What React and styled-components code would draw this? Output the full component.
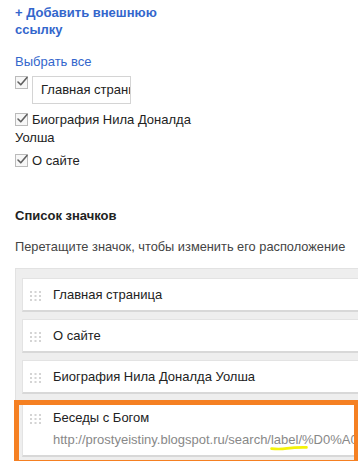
import React from "react";
import styled, { createGlobalStyle } from "styled-components";

const GlobalStyle = createGlobalStyle`
  html, body {
    margin: 0;
    padding: 0;
    background: #ffffff;
    overflow: hidden;
  }
  body {
    font-family: "Liberation Sans", Arial, sans-serif;
    font-size: 13px;
    color: #222222;
  }
`;

const Page = styled.div`
  padding: 4px 0 0 15px;
  width: 440px;
`;

const Top = styled.div`
  width: 185px;
`;

const AddLink = styled.a`
  display: block;
  font-weight: bold;
  font-size: 13px;
  line-height: 17px;
  color: #3366cc;
  text-decoration: none;
`;

const SelectAll = styled.a`
  display: block;
  margin-top: 15px;
  line-height: 17px;
  color: #3366cc;
  text-decoration: none;
`;

const CheckRow = styled.div`
  display: flex;
  align-items: flex-start;
  gap: 4px;
  margin-top: 6px;
`;

const Field = styled.div`
  box-sizing: border-box;
  width: 99px;
  height: 28px;
  line-height: 26px;
  padding-left: 8px;
  border: 1px solid #d4d4d4;
  white-space: nowrap;
  overflow: hidden;
  color: #222222;
`;

const CheckLabel = styled.div`
  margin-top: ${(p) => p.$gap}px;
  line-height: 18px;
  color: #222222;
`;

const Box = styled.span`
  display: inline-block;
  box-sizing: border-box;
  width: 13px;
  height: 13px;
  border: 1px solid #bbbbbb;
  background: #f7f7f7;
  margin-right: ${(p) => (p.$inline ? 4 : 0)}px;
  vertical-align: ${(p) => (p.$inline ? "-2px" : "baseline")};
  position: relative;
  flex-shrink: 0;

  svg {
    position: absolute;
    left: 0;
    top: -2px;
  }
`;

const Checkbox = ({ inline }) => (
  <Box $inline={inline}>
    <svg width="13" height="13" viewBox="0 0 13 13">
      <path
        d="M2 7 L4.8 9.8 L11 2.6"
        fill="none"
        stroke="#606060"
        strokeWidth="1.6"
        strokeLinecap="round"
        strokeLinejoin="round"
      />
    </svg>
  </Box>
);

const SectionTitle = styled.div`
  margin-top: 37px;
  font-weight: bold;
  line-height: 17px;
  color: #222222;
`;

const Hint = styled.div`
  margin-top: 14px;
  font-size: 12.8px;
  line-height: 17px;
  color: #444444;
  white-space: nowrap;
`;

const Panel = styled.div`
  margin-top: 13px;
  background: #eeeeee;
  border: 1px solid #e2e2e2;
  padding: 9px 0 3px 6px;
  display: flex;
  flex-direction: column;
  gap: 7px;
`;

const Item = styled.div`
  position: relative;
  display: flex;
  align-items: flex-start;
  background: #ffffff;
  border: 1px solid #e3e3e3;
  border-bottom: 2px solid #d8d8d8;
  padding: 8px 0 7px 7px;
`;

const HandleWrap = styled.span`
  display: block;
  width: 11px;
  height: 10px;
  margin: 2px 12px 0 0;
  flex-shrink: 0;
`;

const Handle = () => (
  <HandleWrap>
    <svg width="11" height="10" viewBox="0 0 11 10">
      {[0, 4, 8].map((y) =>
        [0, 4.5, 9].map((x) => (
          <rect key={`${x}-${y}`} x={x} y={y} width="2" height="2" fill="#d4d4d4" />
        ))
      )}
    </svg>
  </HandleWrap>
);

const ItemText = styled.div`
  display: flex;
  flex-direction: column;
  gap: 6px;
  white-space: nowrap;
`;

const ItemTitle = styled.div`
  line-height: 16px;
  color: #222222;
`;

const ItemUrl = styled.div`
  line-height: 16px;
  color: #888888;
`;

const Marked = styled.span`
  position: relative;

  svg {
    position: absolute;
    left: -1px;
    bottom: -4px;
  }
`;

const Highlight = styled.div`
  position: absolute;
  left: -9px;
  top: -2px;
  width: 345px;
  height: 65px;
  box-sizing: border-box;
  border: 5px solid #f58022;
  pointer-events: none;
`;

const items = ["Главная страница", "О сайте", "Биография Нила Доналда Уолша"];

export default function App() {
  return (
    <>
      <GlobalStyle />
      <Page>
        <Top>
          <AddLink>+ Добавить внешнюю ссылку</AddLink>
          <SelectAll>Выбрать все</SelectAll>
          <CheckRow>
            <Checkbox />
            <Field>Главная страница</Field>
          </CheckRow>
          <CheckLabel $gap={7}>
            <Checkbox inline />
            Биография Нила Доналда Уолша
          </CheckLabel>
          <CheckLabel $gap={5}>
            <Checkbox inline />
            О сайте
          </CheckLabel>
        </Top>
        <SectionTitle>Список значков</SectionTitle>
        <Hint>Перетащите значок, чтобы изменить его расположение</Hint>
        <Panel>
          {items.map((t) => (
            <Item key={t}>
              <Handle />
              <ItemText>
                <ItemTitle>{t}</ItemTitle>
              </ItemText>
            </Item>
          ))}
          <Item>
            <Handle />
            <ItemText>
              <ItemTitle>Беседы с Богом</ItemTitle>
              <ItemUrl>
                http://prostyeistiny.blogspot.ru/search/
                <Marked>
                  label/
                  <svg width="38" height="6" viewBox="0 0 38 6">
                    <path
                      d="M1.5 3.6 Q 9 4.6 17 3.4 T 36.5 2.4"
                      fill="none"
                      stroke="#f4f20a"
                      strokeWidth="2.6"
                      strokeLinecap="round"
                    />
                  </svg>
                </Marked>
                %D0%A0%D0%B0%D0%B7
              </ItemUrl>
            </ItemText>
            <Highlight />
          </Item>
        </Panel>
      </Page>
    </>
  );
}
